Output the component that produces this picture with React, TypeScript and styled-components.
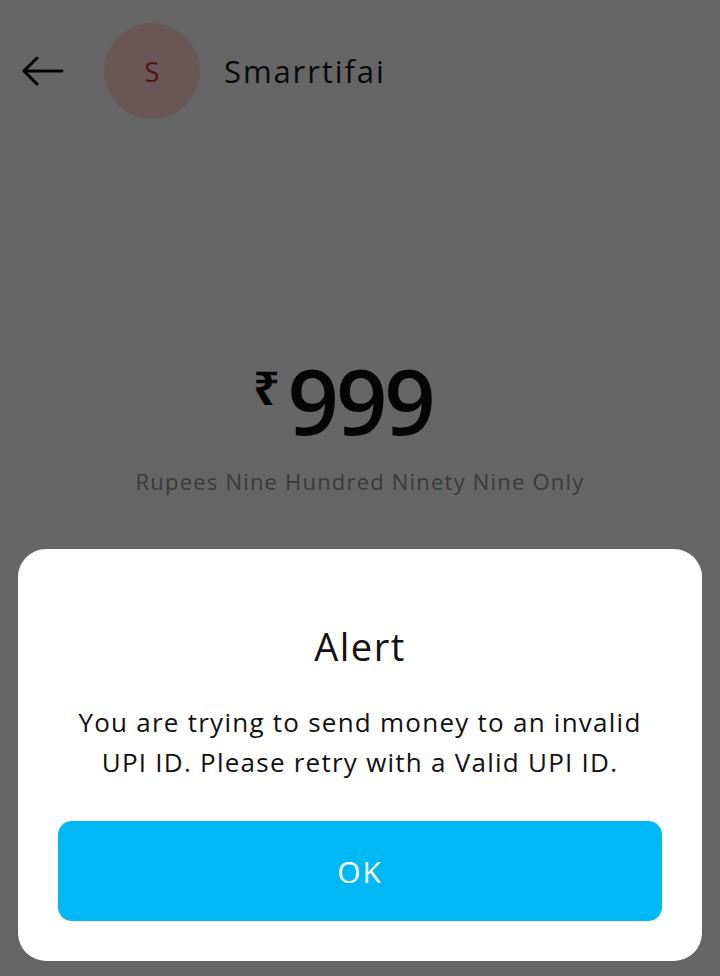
import React from "react";
import styled, { createGlobalStyle } from "styled-components";

const Global = createGlobalStyle`
  html, body { margin: 0; padding: 0; background: #666666; }
  body { font-family: "Open Sans", "Noto Sans", sans-serif; -webkit-font-smoothing: antialiased; }
  * { box-sizing: border-box; }
`;

const Screen = styled.div`
  position: relative;
  width: 720px;
  height: 976px;
  background: #666666;
  overflow: hidden;
`;

const Header = styled.header`
  display: flex;
  align-items: center;
  height: 142px;
  padding: 0 0 0 22px;
`;

const BackButton = styled.button`
  width: 44px;
  height: 44px;
  padding: 0;
  border: 0;
  background: transparent;
  display: flex;
  align-items: center;
  justify-content: flex-start;
  color: #000;
`;

const Avatar = styled.div`
  width: 96px;
  height: 96px;
  border-radius: 50%;
  margin-left: 38px;
  background: #6a5858;
  color: #561515;
  display: flex;
  align-items: center;
  justify-content: center;
  font-size: 28px;
  font-weight: 400;
`;

const Name = styled.h1`
  margin: 0 0 0 24px;
  font-size: 31px;
  font-weight: 500;
  color: #0a0a0a;
  letter-spacing: 1.9px;
`;

const AmountBlock = styled.section`
  display: flex;
  flex-direction: column;
  align-items: center;
  padding-top: 216px;
`;

const Amount = styled.div`
  display: flex;
  align-items: flex-start;
  color: #050505;
  margin-left: -34px;
`;

const Rupee = styled.span`
  font-size: 46px;
  font-weight: 700;
  line-height: 1;
  margin-top: 6px;
  margin-right: 8px;
`;

const Digits = styled.span`
  font-size: 90px;
  font-weight: 600;
  line-height: 84px;
  letter-spacing: -3px;
`;

const Words = styled.p`
  margin: 24px 0 0;
  font-size: 22px;
  color: #3a3a3a;
  letter-spacing: 1.2px;
`;

const Sheet = styled.div`
  position: absolute;
  left: 18px;
  right: 18px;
  top: 549px;
  height: 412px;
  background: #ffffff;
  border-radius: 28px;
  display: flex;
  flex-direction: column;
  align-items: center;
  padding: 74px 20px 0;
`;

const Title = styled.h2`
  margin: 0;
  font-size: 38px;
  font-weight: 500;
  color: #111;
  line-height: 46px;
  letter-spacing: 1.5px;
`;

const Message = styled.p`
  margin: 33px 0 0;
  font-size: 26px;
  line-height: 40px;
  color: #111;
  text-align: center;
  font-weight: 400;
  letter-spacing: 1.25px;
  white-space: nowrap;
`;

const OkButton = styled.button`
  margin-top: 39px;
  width: 604px;
  height: 100px;
  border: 0;
  border-radius: 14px;
  background: #00b9f4;
  color: #ffffff;
  font-family: inherit;
  font-size: 30px;
  font-weight: 500;
  letter-spacing: 2px;
`;

export default function App() {
  return (
    <Screen>
      <Global />
      <Header>
        <BackButton aria-label="Back">
          <svg width="42" height="30" viewBox="0 0 42 30" fill="none" stroke="#000" strokeWidth="3" strokeLinecap="round" strokeLinejoin="round">
            <path d="M40 15H3" />
            <path d="M15 2L2 15l13 13" />
          </svg>
        </BackButton>
        <Avatar>S</Avatar>
        <Name>Smarrtifai</Name>
      </Header>
      <AmountBlock>
        <Amount>
          <Rupee>₹</Rupee>
          <Digits>999</Digits>
        </Amount>
        <Words>Rupees Nine Hundred Ninety Nine Only</Words>
      </AmountBlock>
      <Sheet>
        <Title>Alert</Title>
        <Message>
          You are trying to send money to an invalid
          <br />
          UPI ID. Please retry with a Valid UPI ID.
        </Message>
        <OkButton>OK</OkButton>
      </Sheet>
    </Screen>
  );
}
